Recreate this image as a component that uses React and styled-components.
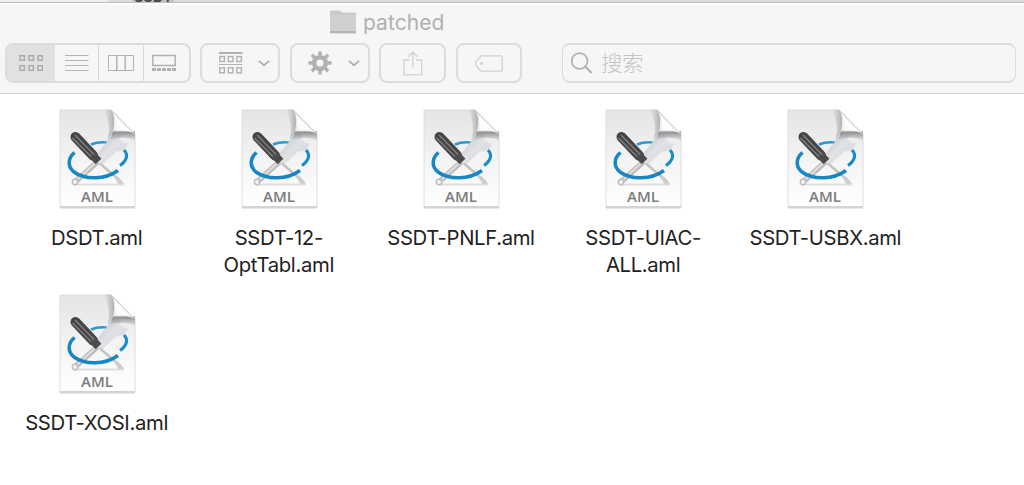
import React from "react";
import styled, { createGlobalStyle } from "styled-components";

const Global = createGlobalStyle`
  * { box-sizing: border-box; }
  body { margin: 0; background: #fff; overflow: hidden; }
`;

const Desktop = styled.main`
  width: 1024px;
  height: 485px;
  display: flex;
  flex-direction: column;
  overflow: hidden;
  background: #fff;
  font-family: Inter, "Noto Sans CJK SC", sans-serif;
`;

const BackWindow = styled.div`
  height: 3px;
  flex: none;
  display: flex;
  overflow: hidden;
  background: #dcdcdc;
  border-bottom: 1px solid #bebebe;
`;
const BackSidebar = styled.div`
  width: 108px;
  background: #eee;
`;
const BackName = styled.span`
  margin: -12px 0 0 24px;
  padding: 0 2px;
  height: 17px;
  background: #c4c4c4;
  color: #444;
  font-size: 15px;
  line-height: 18px;
  font-weight: 600;
  letter-spacing: -0.4px;
`;

const Header = styled.header`
  height: 91px;
  flex: none;
  background: #f6f6f6;
  border-top: 2px solid #fdfdfd;
  border-bottom: 1px solid #d2d2d2;
`;
const TitleBar = styled.div`
  height: 38px;
  display: flex;
  align-items: center;
  padding: 0 0 3px 330px;
  gap: 7px;
`;
const Title = styled.h1`
  margin: 0;
  font-size: 21px;
  line-height: 28px;
  font-weight: 400;
  letter-spacing: 0.05px;
  color: #b0b0b0;
`;
const Toolbar = styled.div`
  display: flex;
  height: 40px;
  padding-left: 5px;
`;
const Control = styled.div`
  width: ${(p) => p.$w}px;
  margin-right: ${(p) => p.$gap}px;
  height: 40px;
  flex: none;
  display: flex;
  align-items: center;
  justify-content: center;
  overflow: hidden;
  border: 2px solid #dcdcdc;
  border-radius: 8px;
`;
const MenuControl = styled(Control)`
  justify-content: flex-end;
  padding-right: 8px;
  gap: ${(p) => p.$inner}px;
`;
const Segment = styled.button`
  width: ${(p) => p.$w}px;
  height: 36px;
  padding: 0 ${(p) => p.$pad || 0}px 0 0;
  border: 0;
  border-right: ${(p) => (p.$line ? "1px solid #d9d9d9" : "0")};
  background: ${(p) => (p.$on ? "#e1e1e1" : "transparent")};
  display: flex;
  align-items: center;
  justify-content: center;
`;
const Search = styled(Control)`
  border-width: 2px 1.5px;
  justify-content: flex-start;
  padding-left: 8px;
  gap: 8px;
`;
const Placeholder = styled.span`
  font-family: "Noto Sans CJK SC", sans-serif;
  font-weight: 300;
  font-size: 21.3px;
  line-height: 30px;
  padding-bottom: 2px;
  color: #c4c4c4;
`;

const Files = styled.section`
  display: grid;
  grid-template-columns: repeat(5, 182.2px);
  grid-auto-rows: 185px;
  padding: 15px 0 0 6px;
`;
const File = styled.article`
  display: flex;
  flex-direction: column;
  align-items: center;
`;
const Name = styled.span`
  margin-top: 14px;
  padding-right: 1px;
  font-size: 20.3px;
  line-height: 27px;
  letter-spacing: -0.34px;
  color: #222;
  text-align: center;
  white-space: pre-line;
`;

const Folder = () => (
  <svg width="26" height="25" viewBox="0 0 26 25">
    <path d="M0 1.5Q0 .5 1 .5H10L12 2.5H25Q26 2.5 26 3.5V22H0Z" fill="#c9c9c9" />
    <rect y="4.5" width="26" height="16.5" fill="#d0d0d0" />
    <rect y="21" width="26" height="2" fill="#b5b5b5" />
    <rect x="0" y="23" width="26" height="1" fill="#ddd" />
  </svg>
);

const squares = (y) =>
  [0, 9, 18].map((x) => (
    <rect key={x + "-" + y} x={x + 1} y={y} width="4.4" height="4.6" />
  ));

const GridIcon = () => (
  <svg width="24" height="18" viewBox="0 0 24 18" fill="none" stroke="#ababab" strokeWidth="1.5">
    {squares(1.7)}
    {squares(11.7)}
  </svg>
);
const ListIcon = () => (
  <svg width="24" height="18" viewBox="0 0 24 18" stroke="#b4b4b4" strokeWidth="1">
    <path d="M0 1.5H23.5M0 6.5H23.5M0 11.5H23.5M0 16.5H23.5" />
  </svg>
);
const ColumnsIcon = () => (
  <svg width="26" height="18" viewBox="0 0 26 18" fill="none" stroke="#b2b2b2">
    <path d="M.5 1.5H25.5V16.5H.5Z" />
    <path d="M8.8 1V17M17.2 1V17" strokeWidth="1.5" />
  </svg>
);
const GalleryIcon = () => (
  <svg width="24" height="18" viewBox="0 0 24 18" fill="none" stroke="#b0b0b0">
    <path d="M.8 1.5H23.2V11.5H.8Z" strokeWidth="1.5" />
    <path d="M0 15.5H24" strokeWidth="3" strokeDasharray="4 1" />
  </svg>
);
const ArrangeIcon = () => (
  <svg width="24" height="22" viewBox="0 0 24 22" fill="none" stroke="#b0b0b0" strokeWidth="1.4">
    <path d="M0 1H23.5" strokeWidth="2" />
    <path d="M0 12.5H23.5" strokeWidth="1" />
    {[0, 8.5, 17].map((x) => (
      <g key={x}>
        <rect x={x + 0.8} y="4.5" width="4.6" height="5" />
        <rect x={x + 0.8} y="15.8" width="4.6" height="5" />
      </g>
    ))}
  </svg>
);
const Chevron = () => (
  <svg width="12" height="7" viewBox="0 0 12 7" fill="none" stroke="#b0b0b0" strokeWidth="1.8">
    <path d="M.8 .9L6 5.3L11.2 .9" />
  </svg>
);
const GearIcon = () => (
  <svg width="24" height="24" viewBox="-12 -12 24 24" fill="none" stroke="#b2b2b2">
    <circle r="5.8" strokeWidth="4.6" />
    {[0, 45, 90, 135].map((a) => (
      <path key={a} d="M-11.6 0H-7M7 0H11.6" strokeWidth="3.4" transform={`rotate(${a})`} />
    ))}
  </svg>
);
const ShareIcon = () => (
  <svg width="20" height="25" viewBox="0 0 20 25" fill="none" stroke="#d1d1d1" strokeWidth="1.3">
    <path d="M6.5 9H.9V23.8H18.7V9H13M9.8 16.5V1.3M5 5.8L9.8 1.1L14.6 5.8" />
  </svg>
);
const TagIcon = () => (
  <svg width="28" height="17" viewBox="0 0 28 17" fill="none" stroke="#d0d0d0" strokeWidth="1.3">
    <path d="M7 .8H26Q27.2 .8 27.2 2V15Q27.2 16.2 26 16.2H7Q5.8 16.2 4.8 15L1.2 10.3Q0 8.5 1.2 6.7L4.8 2Q5.8 .8 7 .8Z" />
    <circle cx="6.5" cy="8.5" r=".9" />
  </svg>
);
const SearchIcon = () => (
  <svg width="22" height="22" viewBox="0 0 22 22" fill="none" stroke="#b1b1b1" strokeWidth="1.6">
    <circle cx="8.6" cy="9" r="7.9" />
    <path d="M14.2 14.5L20.7 21" strokeWidth="1.9" />
  </svg>
);

const AmlIcon = () => (
  <svg width="77" height="101" viewBox="-1 -.5 77 101">
    <defs>
      <linearGradient id="paper" x1="0" y1="0" x2="0" y2="1">
        <stop offset="0" stopColor="#e4e4e4" />
        <stop offset=".55" stopColor="#f5f5f5" />
        <stop offset="1" stopColor="#fff" />
      </linearGradient>
      <linearGradient id="curl" x1="54" y1="23" x2="65" y2="12" gradientUnits="userSpaceOnUse">
        <stop offset="0" stopColor="#d5d5d5" />
        <stop offset=".3" stopColor="#fafafa" />
        <stop offset=".7" stopColor="#fff" />
        <stop offset="1" stopColor="#ececec" />
      </linearGradient>
      <linearGradient id="shadeLeft" x1="44" y1="0" x2="55" y2="0" gradientUnits="userSpaceOnUse">
        <stop offset="0" stopColor="#999" stopOpacity="0" />
        <stop offset="1" stopColor="#888" stopOpacity=".65" />
      </linearGradient>
      <linearGradient id="shadeBelow" x1="0" y1="33" x2="0" y2="22" gradientUnits="userSpaceOnUse">
        <stop offset="0" stopColor="#999" stopOpacity="0" />
        <stop offset="1" stopColor="#666" stopOpacity=".75" />
      </linearGradient>
      <linearGradient id="wrench" x1="0" y1="0" x2="1" y2="1">
        <stop offset="0" stopColor="#b9bcc0" />
        <stop offset=".5" stopColor="#e0e2e5" />
        <stop offset="1" stopColor="#cfd2d5" />
      </linearGradient>
    </defs>
    <path d="M0 .5H51L75 25V98H0Z" fill="url(#paper)" stroke="#dedede" strokeWidth="1" />
    <path d="M0 97.7H75" stroke="#d4d4d4" strokeWidth="2.4" />
    <path d="M15 75H64" stroke="#dedede" strokeWidth="2" />
    <path d="M31 35C38 32 50 32 58 36" fill="none" stroke="#249bd3" strokeWidth="2.5" />
    <path d="M15 72.5L40 50" stroke="#bcbcbc" strokeWidth="5.5" strokeLinecap="round" />
    <path d="M17 70.5L39 50" stroke="#dedede" strokeWidth="2.2" />
    <circle cx="15" cy="72.5" r="2.7" fill="#f4f4f4" stroke="#bdbdbd" strokeWidth="1.4" />
    <path d="M34 48L48 31Q47 26 51 23L60 25L60 30L65 34L68 33Q67 42 56 42L41 56Z" fill="url(#wrench)" />
    <path d="M40 54L61 72" stroke="#c3c3c3" strokeWidth="2.4" />
    <path d="M53 66L58 67L64 74L59 75Z" fill="#cecece" />
    <path d="M14.5 43C7.5 49 7.5 57 14 62.5C25 70.5 45 70.5 58 61" fill="none" stroke="#1687c3" strokeWidth="3.5" />
    <path d="M64 40.5C68.5 45 67 51 60 56" fill="none" stroke="#188cc9" strokeWidth="3.1" />
    <path d="M15.5 27.5L33 46" stroke="#454545" strokeWidth="10" strokeLinecap="round" />
    <path d="M31 44L38.5 52" stroke="#4c4c4c" strokeWidth="8" />
    <path d="M15 25.5L34 45M12.5 28.5L31 47" stroke="#838383" strokeWidth="1.3" />
    <path d="M44 0H51Q56 8 53 22L48 28Q51 14 44 0Z" fill="url(#shadeLeft)" />
    <path d="M53 22H75V31Q66 26 50 30Z" fill="url(#shadeBelow)" />
    <path d="M52 0Q57 10 55 21Q65 19 75 24.5Z" fill="url(#curl)" />
    <path d="M51 .5L75 25" stroke="#c7c7c7" strokeWidth="1" />
    <text x="21" y="92.9" textLength="32" fontFamily="Open Sans, sans-serif" fontSize="15" fontWeight="600" fill="#7c7c7c">AML</text>
  </svg>
);

const files = [
  "DSDT.aml",
  "SSDT-12-\nOptTabl.aml",
  "SSDT-PNLF.aml",
  "SSDT-UIAC-\nALL.aml",
  "SSDT-USBX.aml",
  "SSDT-XOSI.aml",
];

export default function App() {
  return (
    <Desktop>
      <Global />
      <BackWindow>
        <BackSidebar />
        <BackName>SSDT</BackName>
      </BackWindow>
      <Header>
        <TitleBar>
          <Folder />
          <Title>patched</Title>
        </TitleBar>
        <Toolbar>
          <Control $w={186} $gap={9}>
            <Segment $w={48} $on><GridIcon /></Segment>
            <Segment $w={44} $line><ListIcon /></Segment>
            <Segment $w={45} $line><ColumnsIcon /></Segment>
            <Segment $w={45} $pad={5}><GalleryIcon /></Segment>
          </Control>
          <MenuControl $w={80} $gap={10} $inner={15}><ArrangeIcon /><Chevron /></MenuControl>
          <MenuControl $w={80} $gap={9} $inner={16}><GearIcon /><Chevron /></MenuControl>
          <Control $w={67} $gap={10}><ShareIcon /></Control>
          <Control $w={66} $gap={40}><TagIcon /></Control>
          <Search $w={454} $gap={0}><SearchIcon /><Placeholder>搜索</Placeholder></Search>
        </Toolbar>
      </Header>
      <Files>
        {files.map((name) => (
          <File key={name}>
            <AmlIcon />
            <Name>{name}</Name>
          </File>
        ))}
      </Files>
    </Desktop>
  );
}
